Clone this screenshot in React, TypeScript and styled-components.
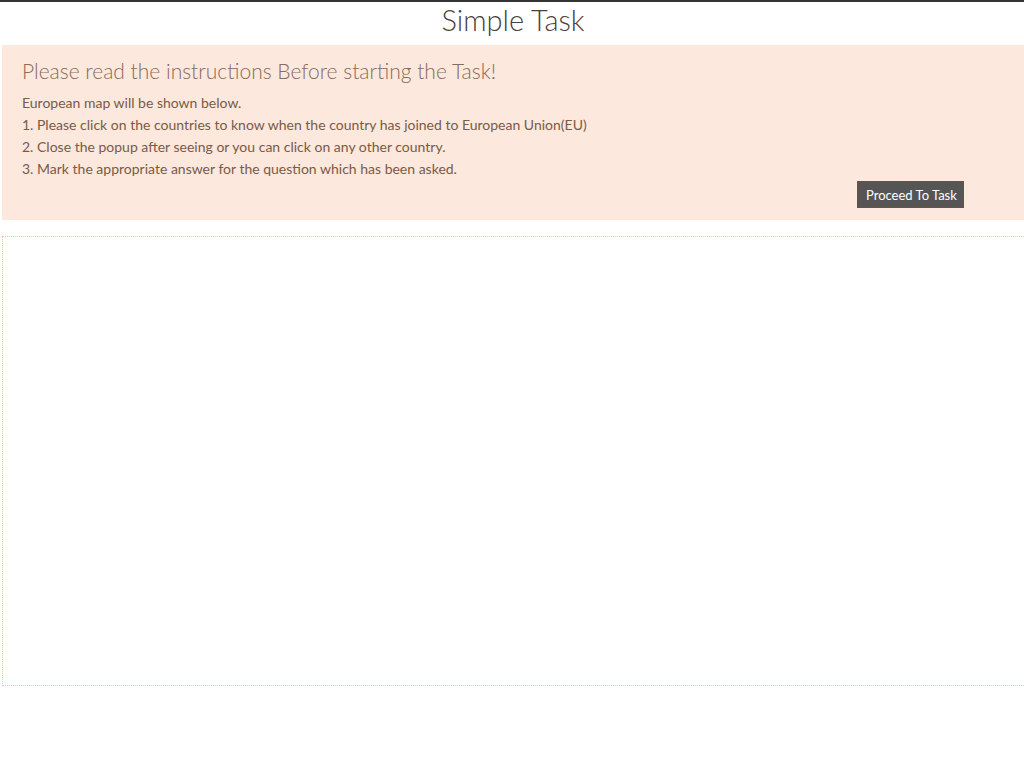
import styled, { createGlobalStyle } from 'styled-components';

const GlobalStyle = createGlobalStyle`
  html, body {
    margin: 0;
    padding: 0;
    background: #fff;
  }
  body {
    font-family: Lato, 'Open Sans', sans-serif;
    border-top: 2px solid #333;
  }
`;

const steps = [
  'European map will be shown below.',
  '1. Please click on the countries to know when the country has joined to European Union(EU)',
  '2. Close the popup after seeing or you can click on any other country.',
  '3. Mark the appropriate answer for the question which has been asked.',
];

const App = () => {
  return (
    <>
      <GlobalStyle />
      <S.Page>
        <S.Title>Simple Task</S.Title>
        <S.Panel>
          <S.Heading>Please read the instructions Before starting the Task!</S.Heading>
          {steps.map((step) => (
            <S.Line key={step}>{step}</S.Line>
          ))}
          <S.Actions>
            <S.Button>Proceed To Task</S.Button>
          </S.Actions>
        </S.Panel>
        <S.MapArea />
      </S.Page>
    </>
  );
};

const S = {
  Page: styled.div`
    display: flex;
    flex-direction: column;
    padding-left: 2px;
  `,

  Title: styled.h1`
    margin: 0;
    height: 43px;
    line-height: 36px;
    text-align: center;
    font-size: 29px;
    font-weight: 300;
    color: #4a4040;
  `,

  Panel: styled.div`
    background: #fce8dc;
    padding: 12px 60px 12px 20px;
    height: 151px;
  `,

  Heading: styled.h3`
    margin: 0 0 7px;
    font-size: 21px;
    line-height: 28px;
    font-weight: 300;
    color: #8a6a5a;
  `,

  Line: styled.p`
    margin: 0;
    font-size: 14px;
    line-height: 22px;
    color: #7a5a48;
  `,

  Actions: styled.div`
    display: flex;
    justify-content: flex-end;
    margin-top: 1px;
  `,

  Button: styled.button`
    font-family: inherit;
    font-size: 13px;
    white-space: nowrap;
    color: #fff;
    background: #555;
    border: 1px solid #6b5043;
    padding: 0 8px;
    height: 27px;
    width: 107px;
  `,

  MapArea: styled.div`
    margin-top: 16px;
    height: 448px;
    border: 1px dotted #f7bfa2;
    border-right: none;
  `,
};

export default App;
